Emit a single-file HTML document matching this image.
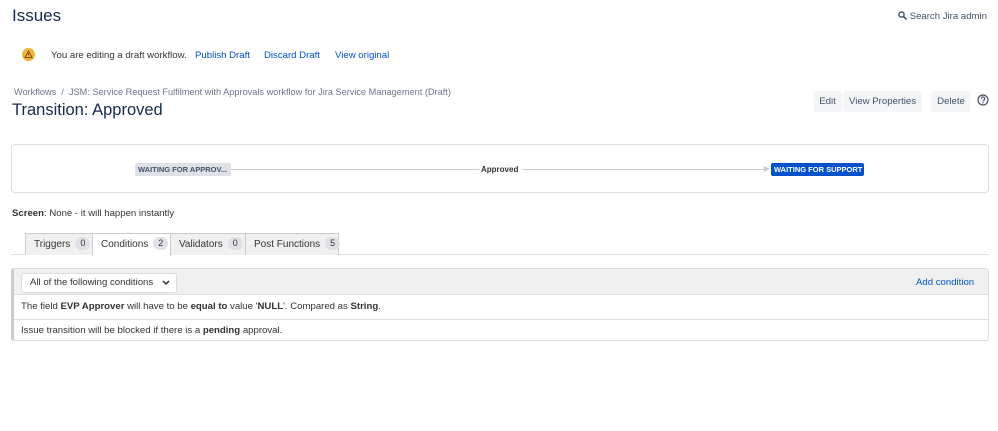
<!DOCTYPE html>
<html><head><style>
*{margin:0;padding:0;box-sizing:border-box}
body{width:998px;height:431px;background:#fff;font-family:"Liberation Sans",sans-serif;font-size:9.6px;color:#172b4d;position:relative;overflow:hidden}
.a{position:absolute;white-space:nowrap}
.l{color:#0052cc}
.btn{position:absolute;top:91px;height:21px;background:#f4f5f7;color:#42526e;font-size:9.6px;line-height:21px;text-align:center;border-radius:3px}
.tab{position:absolute;top:233px;height:22px;border:1px solid #ccc;border-bottom:none;background:#f0f0f0;color:#333;line-height:21px;padding-left:8px;font-size:10px;white-space:nowrap}
.badge{display:inline-block;background:#dfe1e6;border-radius:8px;padding:0 5px;font-size:9px;line-height:13px;margin-left:5px;color:#333;vertical-align:1px}
</style></head><body>
<div class="a" style="left:12px;top:6px;font-size:17px;color:#172b4d">Issues</div>
<div class="a" style="left:898px;top:11px;color:#42526e"><svg width="9" height="9" style="vertical-align:-1px"><circle cx="3.5" cy="3.5" r="2.6" fill="none" stroke="#42526e" stroke-width="1.4"/><path d="M5.5 5.5L8.5 8.5" stroke="#42526e" stroke-width="1.6"/></svg> Search Jira admin</div>
<svg class="a" style="left:22px;top:48px" width="13" height="13"><circle cx="6.5" cy="6.5" r="6.5" fill="#f2b33d"/><path d="M6.5 3L10 9.5H3Z" fill="none" stroke="#7a5200" stroke-width="1"/><path d="M6.5 5.2v2.2" stroke="#7a5200" stroke-width="1"/></svg>
<div class="a" style="left:51px;top:50px;color:#333">You are editing a draft workflow.</div>
<div class="a l" style="left:195px;top:50px">Publish Draft</div>
<div class="a l" style="left:264px;top:50px">Discard Draft</div>
<div class="a l" style="left:335px;top:50px">View original</div>
<div class="a" style="left:14px;top:87px;color:#6b778c;font-size:9.2px">Workflows &nbsp;/ &nbsp;JSM: Service Request Fulfilment with Approvals workflow for Jira Service Management (Draft)</div>
<div class="a" style="left:12px;top:101px;font-size:16.5px;color:#172b4d">Transition: Approved</div>
<div class="btn" style="left:813px;width:29px">Edit</div>
<div class="btn" style="left:843px;width:79px">View Properties</div>
<div class="btn" style="left:931px;width:40px">Delete</div>
<svg class="a" style="left:977px;top:94px" width="12" height="12"><circle cx="6" cy="6" r="5" fill="none" stroke="#42526e" stroke-width="1.2"/><path d="M4.3 4.8a1.7 1.7 0 1 1 2.4 1.4c-.5.3-.7.5-.7 1.1" fill="none" stroke="#42526e" stroke-width="1.1"/><circle cx="6" cy="8.8" r=".7" fill="#42526e"/></svg>
<div class="a" style="left:11px;top:144px;width:978px;height:49px;border:1px solid #ddd;border-radius:4px"></div>
<div class="a" style="left:135px;top:163px;width:96px;height:13px;background:#dfe1e6;border-radius:2px;font-size:7.5px;font-weight:bold;color:#42526e;line-height:13px;padding-left:3px;overflow:hidden">WAITING FOR APPROV...</div>
<div class="a" style="left:231px;top:169px;width:248px;height:1px;background:#ccc"></div>
<div class="a" style="left:481px;top:165px;font-size:8px;font-weight:bold;color:#333">Approved</div>
<div class="a" style="left:522px;top:169px;width:244px;height:1px;background:#ccc"></div>
<div class="a" style="left:764px;top:166px;width:0;height:0;border-left:6px solid #ccc;border-top:3.5px solid transparent;border-bottom:3.5px solid transparent"></div>
<div class="a" style="left:771px;top:163px;width:93px;height:13px;background:#0052cc;border-radius:2px;font-size:7.5px;font-weight:bold;color:#fff;line-height:13px;padding-left:3px;overflow:hidden">WAITING FOR SUPPORT</div>
<div class="a" style="left:12px;top:208px;color:#333"><b>Screen</b>: None - it will happen instantly</div>
<div class="a" style="left:11px;top:254px;width:978px;height:1px;background:#ddd"></div>
<div class="tab" style="left:25px;width:68px">Triggers<span class="badge">0</span></div>
<div class="tab" style="left:92px;width:79px;background:#fff;height:23px;z-index:2">Conditions<span class="badge">2</span></div>
<div class="tab" style="left:170px;width:76px">Validators<span class="badge">0</span></div>
<div class="tab" style="left:245px;width:94px">Post Functions<span class="badge">5</span></div>
<div class="a" style="left:11px;top:268px;width:978px;height:73px;border:1px solid #ddd;border-left:3px solid #ccc;border-radius:3px"></div>
<div class="a" style="left:14px;top:269px;width:974px;height:26px;background:#f0f0f0;border-bottom:1px solid #ddd"></div>
<div class="a" style="left:21px;top:273px;width:156px;height:20px;background:#fff;border:1px solid #ddd;border-radius:3px;color:#333;line-height:18px;padding-left:8px">All of the following conditions<svg style="position:absolute;left:140px;top:6px" width="8" height="6"><path d="M1 1l3 3 3-3" fill="none" stroke="#333" stroke-width="1.5"/></svg></div>
<div class="a l" style="left:916px;top:277px">Add condition</div>
<div class="a" style="left:21px;top:301px;color:#333">The field <b>EVP Approver</b> will have to be <b>equal to</b> value '<b>NULL</b>'. Compared as <b>String</b>.</div>
<div class="a" style="left:14px;top:319px;width:974px;height:1px;background:#ddd"></div>
<div class="a" style="left:21px;top:325px;color:#333">Issue transition will be blocked if there is a <b>pending</b> approval.</div>
</body></html>
